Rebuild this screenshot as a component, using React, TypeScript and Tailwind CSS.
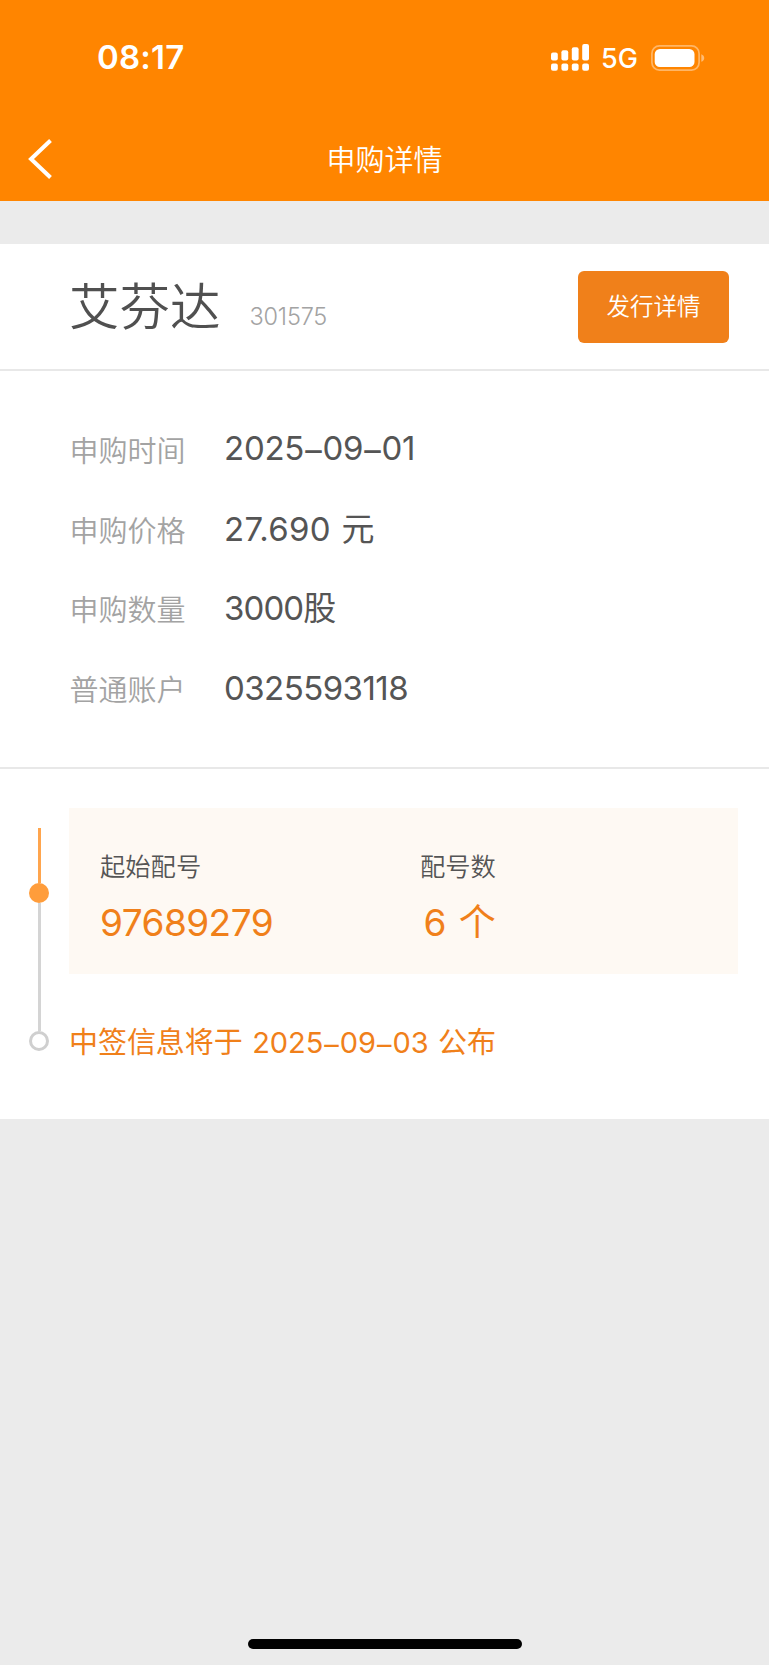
import type { ReactNode } from 'react'

function DateText({ value }: { value: string }) {
  const [year, month, day] = value.split('-')

  return (
    <>
      {year}
      <span className="mx-[1px] align-[-2px]">–</span>
      {month}
      <span className="mx-[1px] align-[-2px]">–</span>
      {day}
    </>
  )
}

const details = [
  { label: '申购时间', value: <DateText value="2025-09-01" />, className: '-tracking-[0.25px]' },
  { label: '申购价格', value: '27.690 元', className: 'tracking-[0.3px] [word-spacing:1px]' },
  { label: '申购数量', value: '3000股', className: '-tracking-[0.9px]' },
  { label: '普通账户', value: '0325593118', className: '-tracking-[0.55px]' },
]

function SignalIcon() {
  const bars = [
    { x: 0, y: 8.4 },
    { x: 10.4, y: 6.2 },
    { x: 20.8, y: 3.2 },
    { x: 31.2, y: 0 },
  ]

  return (
    <svg width="38" height="28" viewBox="0 0 38 28" fill="white">
      {bars.map(bar => (
        <g key={ bar.x }>
          <rect x={ bar.x } y={ bar.y } width="6.8" height={ 16.4 - bar.y } rx="2" />
          <rect x={ bar.x } y="19.4" width="6.8" height="7.4" rx="2" />
        </g>
      ))}
    </svg>
  )
}

function BatteryIcon() {
  return (
    <svg width="54" height="26" viewBox="0 0 54 26" fill="none">
      <rect x="0.9" y="0.9" width="47.2" height="24.2" rx="7.5" stroke="white" strokeOpacity="0.4" strokeWidth="1.7" />
      <rect x="3.7" y="3.9" width="39.8" height="18.2" rx="5.2" fill="white" />
      <path d="M50.3 9.2C54.2 10.6 54.2 15.4 50.3 16.8Z" fill="white" fillOpacity="0.45" />
    </svg>
  )
}

function StatusBar() {
  return (
    <div className="flex h-[115px] items-center justify-between pr-[64px] pl-[97px] text-white">
      <span className="text-[33px] leading-none font-semibold tracking-[0.2px]">08:17</span>
      <div className="flex items-center">
        <SignalIcon />
        <span className="ml-[12px] w-[37px] pt-[2px] text-[27px] leading-none font-medium">5G</span>
        <div className="ml-[13px]">
          <BatteryIcon />
        </div>
      </div>
    </div>
  )
}

function NavBar() {
  return (
    <div className="grid h-[86px] grid-cols-3 items-center text-white">
      <button className="ml-[28px] w-6 pt-[2px]" aria-label="返回">
        <svg width="25" height="40" viewBox="0 0 25 40" fill="none">
          <path d="M22.5 1.5L3 20L22.5 38.5" stroke="white" strokeWidth="4" />
        </svg>
      </button>
      <h1 className="pt-[4px] text-center text-[29px] leading-none font-[350]">申购详情</h1>
    </div>
  )
}

function NumberBlock({ label, children }: { label: string, children: ReactNode }) {
  return (
    <div>
      <div className="pt-[1px] text-[25.3px] leading-[36px] text-[#555]">{label}</div>
      <div className="mt-[11px] text-[37px] leading-[54px] font-[380] text-[#f0801a]">{children}</div>
    </div>
  )
}

export default function App() {
  return (
    <div className="flex h-[1665px] w-[769px] flex-col bg-[#ebebeb] font-['Inter','Noto_Sans_CJK_SC',sans-serif] font-[350]">
      <header className="h-[201px] shrink-0 bg-[#ff8500]">
        <StatusBar />
        <NavBar />
      </header>

      <main className="mt-[43px] h-[875px] bg-white">
        {/* 股票名称 */}
        <section className="flex h-[127px] items-center justify-between border-b-2 border-[#e8e8e8] pr-[40px] pl-[69px]">
          <div className="flex items-baseline pt-[1px]">
            <h2 className="text-[50.5px] leading-[72px] font-[350] text-[#505050]">艾芬达</h2>
            <span className="ml-[29px] text-[23.5px] font-light -tracking-[0.2px] text-[#a3a3a3]">301575</span>
          </div>
          <button className="h-[72px] w-[151px] rounded-[6px] bg-[#f0801a] text-[23.5px] text-white">
            发行详情
          </button>
        </section>

        {/* 申购信息 */}
        <section className="flex h-[398px] flex-col border-b-2 border-[#e8e8e8] pt-[39px] pl-[69.5px]">
          {details.map(item => (
            <div key={ item.label } className="flex h-[79.5px] items-center">
              <span className="w-[154.5px] pt-[4px] text-[29px] leading-none text-[#a3a3a3]">{item.label}</span>
              <span className={ `text-[33px] leading-none font-[380] text-[#555] ${item.className}` }>{item.value}</span>
            </div>
          ))}
        </section>

        {/* 配号进度 */}
        <section className="flex pt-[39px]">
          <div className="ml-[29px] flex w-[20px] flex-col items-center pt-[20px]">
            <div className="h-[55px] w-[3px] bg-[#ffa54d]" />
            <div className="size-[20px] rounded-full bg-[#ff9d3b]" />
            <div className="h-[128px] w-[3px] bg-[#d4d4d4]" />
            <div className="size-[20px] rounded-full border-[3px] border-[#cfcfcf]" />
          </div>
          <div className="ml-[20px] w-[669px]">
            <div className="grid h-[166px] grid-cols-[320px_1fr] bg-[#fef9f3] pt-[40px] pl-[31px]">
              <NumberBlock label="起始配号">
                <span className="-tracking-[0.55px]">97689279</span>
              </NumberBlock>
              <NumberBlock label="配号数">
                <span className="ml-[3.5px] [word-spacing:2px]">6 个</span>
              </NumberBlock>
            </div>
            <p className="mt-[47px] text-[29px] leading-[44px] font-[380] -tracking-[0.05px] text-[#f0801a] [word-spacing:1.4px]">
              中签信息将于
              {' '}
              <DateText value="2025-09-03" />
              {' '}
              公布
            </p>
          </div>
        </section>
      </main>

      <div className="mx-auto mt-auto mb-[16px] h-[10px] w-[274px] rounded-full bg-black" />
    </div>
  )
}
